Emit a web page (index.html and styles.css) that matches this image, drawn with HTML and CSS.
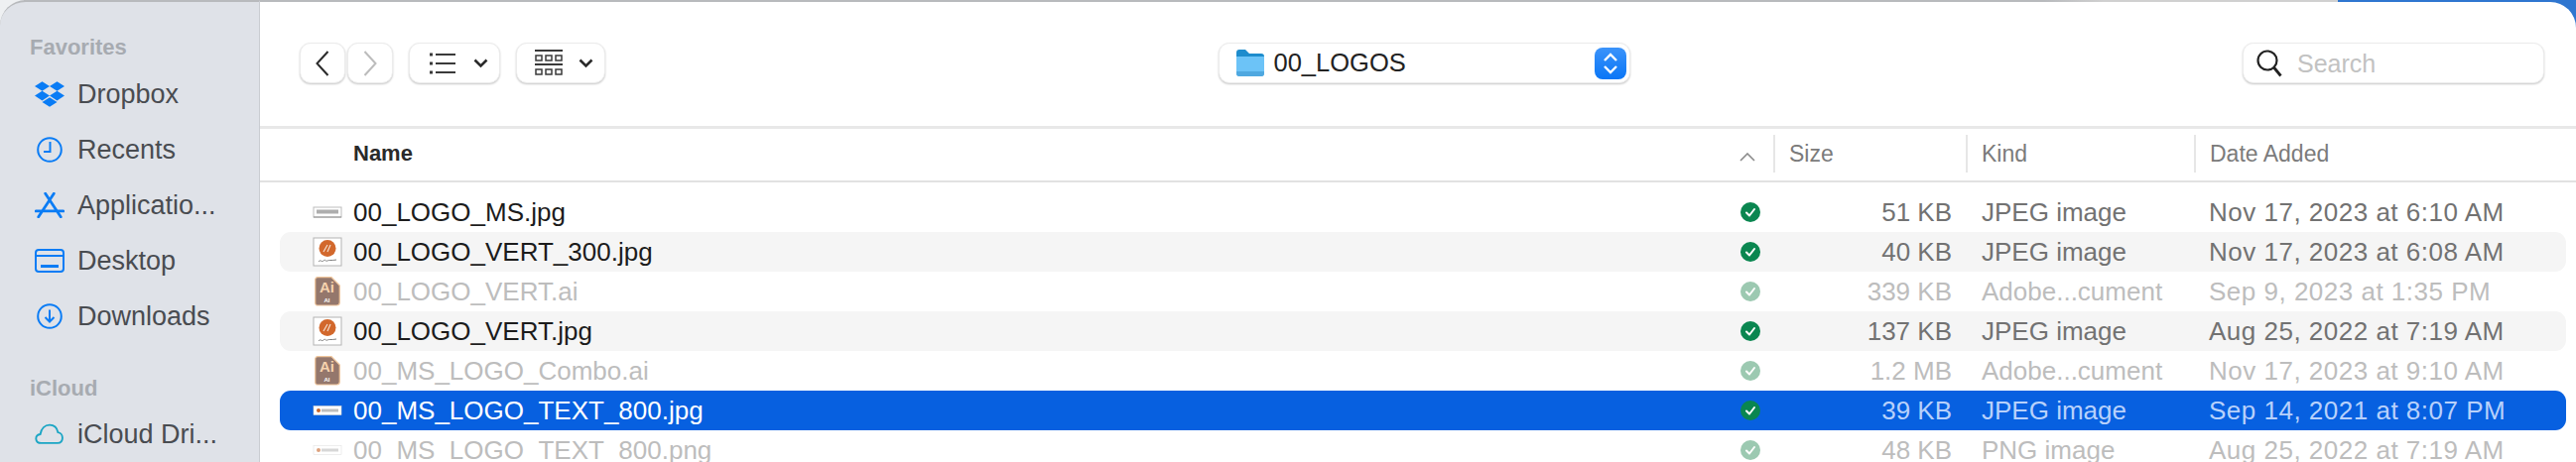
FILE: index.html
```html
<!DOCTYPE html>
<html lang="en">
<head>
  <meta charset="UTF-8" />
  <title>00_LOGOS</title>
  <link rel="stylesheet" href="styles.css">
</head>
<body>

  <svg class="defs" width="0" height="0">
    <symbol id="check" viewBox="0 0 20 20">
      <circle cx="10" cy="10" r="10" fill="currentColor"/>
      <path d="M6 10.500l3 3 5-6.500" fill="none" stroke="#fff" stroke-width="2" stroke-linecap="round" stroke-linejoin="round"/>
    </symbol>
    <symbol id="thumb-wide" viewBox="0 0 30 12">
      <rect x="1" y="1" width="28" height="10" fill="#fff" stroke="#bdbdbd"/>
      <rect x="4" y="3.500" width="22" height="4" fill="#aeaeae"/>
      <path d="M1 11h28" stroke="#8f8f8f" stroke-width="1.200"/>
    </symbol>
    <symbol id="thumb-text" viewBox="0 0 30 12">
      <rect x="1" y="1.500" width="28" height="9" fill="#fff" stroke="#d0d0d0" stroke-width=".6"/>
      <circle cx="6" cy="6" r="2" fill="#c8652a"/>
      <rect x="9" y="4.500" width="17" height="3" fill="#bdbdbd"/>
    </symbol>
    <symbol id="thumb-square" viewBox="0 0 30 30">
      <rect x="1" y="1" width="28" height="28" fill="#fff" stroke="#b4b4b4"/>
      <circle cx="15" cy="11.500" r="8.500" fill="#d2682c"/>
      <path d="M11 15l4-7M15 15l3-7" stroke="#f3dccb" stroke-width="1.200"/>
      <path d="M6 25c2-3 3 1 5-1s2 1 4 0 3 0 9-1" fill="none" stroke="#7e7e7e" stroke-width="1"/>
    </symbol>
  </svg>

  <div class="window">
    <nav class="sidebar">
      <div class="side-head first">Favorites</div>
      <div class="side-item">
        <svg class="side-icon" viewBox="0 0 28 24" fill="#0a7cf5"><path d="M7 0l7 4.500L7 9 0 4.500zM21 0l7 4.500L21 9l-7-4.500zM7 9l7 4.500L7 18l-7-4.500zM21 9l7 4.500-7 4.500-7-4.500zM7 19.500l7-4.500 7 4.500-7 4.500z"/></svg>
        Dropbox
      </div>
      <div class="side-item">
        <svg class="side-icon" viewBox="0 0 28 26" fill="none" stroke="#0a7cf5" stroke-width="2"><circle cx="14" cy="13" r="11.800"/><path d="M14.500 5v10H8"/></svg>
        Recents
      </div>
      <div class="side-item">
        <svg class="side-icon" viewBox="0 0 28 24" fill="none" stroke="#0a7cf5" stroke-width="2.600" stroke-linecap="round"><path d="M10 1l14.500 22M18 1L3.500 23M1 17.500h26"/></svg>
        Applicatio...
      </div>
      <div class="side-item">
        <svg class="side-icon" viewBox="0 0 30 24" fill="none" stroke="#0a7cf5" stroke-width="2"><rect x="1" y="1" width="28" height="22" rx="3"/><path d="M1 7h28"/><path d="M6 17.500h18" stroke-width="3"/></svg>
        Desktop
      </div>
      <div class="side-item">
        <svg class="side-icon" viewBox="0 0 28 26" fill="none" stroke="#0a7cf5" stroke-width="2"><circle cx="14" cy="13" r="11.800"/><path d="M14 6.500v12M9.500 14l4.500 4.500 4.500-4.500"/></svg>
        Downloads
      </div>
      <div class="side-head">iCloud</div>
      <div class="side-item">
        <svg class="side-icon" viewBox="0 0 32 22" fill="none" stroke="#1aa5c4" stroke-width="2"><path d="M7 20.500c-7 0-7.500-8.500-1-9.500C7 5 11 1 16 1s8 3 9 8c6 .5 7 11.500-.5 11.500z"/></svg>
        iCloud Dri...
      </div>
    </nav>

    <main class="content">
      <div class="toolbar">
        <div class="tool-group">
          <div class="nav-btns">
            <button class="btn nav-btn"><svg width="14" height="26" viewBox="0 0 14 26" fill="none" stroke="#2b2b2b" stroke-width="2"><path d="M12.500 1L1.500 13l11 12"/></svg></button>
            <button class="btn nav-btn"><svg width="14" height="26" viewBox="0 0 14 26" fill="none" stroke="#bcbcbc" stroke-width="2"><path d="M1.500 1l11 12-11 12"/></svg></button>
          </div>
          <button class="btn view-btn list-btn">
            <svg width="26" height="24" viewBox="0 0 26 24" fill="none" stroke="#3a3a3a" stroke-width="2"><path d="M6 3h20M6 12h20M6 21h20"/><path d="M0 3h3M0 12h3M0 21h3" stroke-width="3"/></svg>
            <svg width="15" height="10" viewBox="0 0 15 10" fill="none" stroke="#2b2b2b" stroke-width="2.600"><path d="M1.500 1.500l6 6 6-6"/></svg>
          </button>
          <button class="btn view-btn grid-btn">
            <svg width="28" height="28" viewBox="0 0 28 28" fill="none" stroke="#3a3a3a" stroke-width="1.500"><path d="M0 1h28M0 15h28" stroke-width="2"/><rect x="1" y="6" width="6" height="5"/><rect x="11" y="6" width="6" height="5"/><rect x="21" y="6" width="6" height="5"/><rect x="1" y="20" width="6" height="5"/><rect x="11" y="20" width="6" height="5"/><rect x="21" y="20" width="6" height="5"/></svg>
            <svg width="15" height="10" viewBox="0 0 15 10" fill="none" stroke="#2b2b2b" stroke-width="2.600"><path d="M1.500 1.500l6 6 6-6"/></svg>
          </button>
        </div>

        <div class="btn path-box">
          <svg width="28" height="27" viewBox="0 0 28 27"><path d="M0 3a3 3 0 0 1 3-3h6l4 4h12a3 3 0 0 1 3 3v4H0z" fill="#1d8ccd"/><path d="M0 7h28v17a3 3 0 0 1-3 3H3a3 3 0 0 1-3-3z" fill="#6cc3f7"/><path d="M0 22h28v2a3 3 0 0 1-3 3H3a3 3 0 0 1-3-3z" fill="#4fa8e0"/></svg>
          <span class="path-name">00_LOGOS</span>
          <span class="stepper">
            <svg width="16" height="24" viewBox="0 0 16 24" fill="none" stroke="#fff" stroke-width="2.400"><path d="M2 9l6-6 6 6M2 15l6 6 6-6"/></svg>
          </span>
        </div>

        <div class="btn search-box">
          <svg width="26" height="28" viewBox="0 0 26 28" fill="none" stroke="#222" stroke-width="2.200"><circle cx="11" cy="11" r="9.500"/><path d="M17.500 18l7 8.500" stroke-width="2.800"/></svg>
          <span>Search</span>
        </div>
      </div>

      <div class="list-head">
        <div class="col-name">Name</div>
        <div class="col-sort"><svg width="16" height="9" viewBox="0 0 16 9" fill="none" stroke="#8a8a8a" stroke-width="1.600"><path d="M1 8l7-7 7 7"/></svg></div>
        <div class="col-title">Size</div>
        <div class="col-title">Kind</div>
        <div class="col-title">Date Added</div>
      </div>

      <div class="rows">
        <div class="row">
          <svg class="thumb"><use href="#thumb-wide"/></svg>
          <div class="name">00_LOGO_MS.jpg</div>
          <svg class="check"><use href="#check"/></svg>
          <div class="size">51 KB</div><div class="kind">JPEG image</div><div class="date">Nov 17, 2023 at 6:10 AM</div>
        </div>
        <div class="row alt">
          <svg class="thumb"><use href="#thumb-square"/></svg>
          <div class="name">00_LOGO_VERT_300.jpg</div>
          <svg class="check"><use href="#check"/></svg>
          <div class="size">40 KB</div><div class="kind">JPEG image</div><div class="date">Nov 17, 2023 at 6:08 AM</div>
        </div>
        <div class="row dim">
          <svg class="thumb" viewBox="-2 0 30 30"><path d="M3 .7h14l8.300 8.300v17a3 3 0 0 1-3 3H3a2.300 2.300 0 0 1-2.300-2.300V3A2.300 2.300 0 0 1 3 .7z" class="ai-page"/><text x="12.500" y="16" text-anchor="middle" class="ai-big">Ai</text><text x="12.500" y="26" text-anchor="middle" class="ai-small">AI</text></svg>
          <div class="name">00_LOGO_VERT.ai</div>
          <svg class="check"><use href="#check"/></svg>
          <div class="size">339 KB</div><div class="kind">Adobe...cument</div><div class="date">Sep 9, 2023 at 1:35 PM</div>
        </div>
        <div class="row alt">
          <svg class="thumb"><use href="#thumb-square"/></svg>
          <div class="name">00_LOGO_VERT.jpg</div>
          <svg class="check"><use href="#check"/></svg>
          <div class="size">137 KB</div><div class="kind">JPEG image</div><div class="date">Aug 25, 2022 at 7:19 AM</div>
        </div>
        <div class="row dim">
          <svg class="thumb" viewBox="-2 0 30 30"><path d="M3 .7h14l8.300 8.300v17a3 3 0 0 1-3 3H3a2.300 2.300 0 0 1-2.300-2.300V3A2.300 2.300 0 0 1 3 .7z" class="ai-page"/><text x="12.500" y="16" text-anchor="middle" class="ai-big">Ai</text><text x="12.500" y="26" text-anchor="middle" class="ai-small">AI</text></svg>
          <div class="name">00_MS_LOGO_Combo.ai</div>
          <svg class="check"><use href="#check"/></svg>
          <div class="size">1.2 MB</div><div class="kind">Adobe...cument</div><div class="date">Nov 17, 2023 at 9:10 AM</div>
        </div>
        <div class="row selected">
          <svg class="thumb"><use href="#thumb-text"/></svg>
          <div class="name">00_MS_LOGO_TEXT_800.jpg</div>
          <svg class="check"><use href="#check"/></svg>
          <div class="size">39 KB</div><div class="kind">JPEG image</div><div class="date">Sep 14, 2021 at 8:07 PM</div>
        </div>
        <div class="row dim">
          <svg class="thumb faded"><use href="#thumb-text"/></svg>
          <div class="name">00_MS_LOGO_TEXT_800.png</div>
          <svg class="check"><use href="#check"/></svg>
          <div class="size">48 KB</div><div class="kind">PNG image</div><div class="date">Aug 25, 2022 at 7:19 AM</div>
        </div>
      </div>
    </main>
  </div>

</body>
</html>
```

FILE: styles.css
```css
html, body {
  height: 100%;
}
body {
  margin: 0;
  overflow: hidden;
  font-family: 'Liberation Sans', Arial, sans-serif;
  background: linear-gradient(to right, #eef0f2 0 24px, #b8babd 24px 2060px, #d0d0d0 2120px 2356px, #2f76d0 2356px);
}
.defs {
  position: absolute;
}
.ai-page {
  fill: #94776c;
  stroke: #f0c69c;
  stroke-width: 1.2;
}
.ai-big {
  font: bold 15px 'Liberation Sans', sans-serif;
  fill: #f7d3ae;
}
.ai-small {
  font: bold 6px 'Liberation Sans', sans-serif;
  fill: #fff;
}
.window {
  display: flex;
  height: 466px;
}

/* sidebar */
.sidebar {
  box-sizing: border-box;
  width: 262px;
  flex: none;
  background-color: #dfe2e8;
  border-top: 2px solid #b8babd;
  border-right: 1px solid #c9ccd2;
  border-top-left-radius: 26px;
}
.side-head {
  height: 24px;
  line-height: 24px;
  margin: 33px 0 6px 30px;
  font-size: 22px;
  font-weight: bold;
  color: #a7abb1;
}
.side-head.first {
  margin: 34px 0 7px 30px;
}
.side-item {
  display: flex;
  align-items: center;
  height: 56px;
  font-size: 27px;
  color: #494c51;
}
.side-icon {
  width: 30px;
  height: 26px;
  margin: 0 13px 0 35px;
  flex: none;
}

/* main area */
.content {
  flex: 1;
  min-width: 0;
  margin-top: 2px;
  background-color: #fff;
  border-top-right-radius: 26px;
  overflow: hidden;
}
.toolbar {
  box-sizing: border-box;
  height: 125px;
  padding: 41px 32px 0 40px;
  display: flex;
  justify-content: space-between;
  align-items: flex-start;
}
.tool-group {
  display: flex;
  gap: 16px;
}
.nav-btns {
  display: flex;
  gap: 2px;
}
.btn {
  box-sizing: border-box;
  height: 41px;
  padding: 0;
  border: 1px solid #ececec;
  border-radius: 11px;
  background: #fff;
  box-shadow: 0 1px 2px rgba(0, 0, 0, 0.22);
}
.nav-btn {
  width: 46px;
  display: flex;
  align-items: center;
  justify-content: center;
}
.view-btn {
  display: flex;
  align-items: center;
}
.list-btn {
  width: 92px;
  gap: 18px;
  padding-left: 20px;
}
.grid-btn {
  width: 90px;
  gap: 16px;
  padding-left: 18px;
}
.path-box {
  width: 415px;
  display: flex;
  align-items: center;
  padding-left: 17px;
  padding-right: 3px;
}
.path-name {
  flex: 1;
  margin-left: 10px;
  font-size: 25.5px;
  color: #222;
}
.stepper {
  width: 32px;
  height: 32px;
  border-radius: 8px;
  background: linear-gradient(#3b93fa, #0a76f6);
  display: flex;
  align-items: center;
  justify-content: center;
}
.search-box {
  width: 304px;
  display: flex;
  align-items: center;
  padding-left: 13px;
  gap: 15px;
  font-size: 25px;
  color: #c2c2c2;
}
.search-box span {
  padding-top: 2px;
}

/* column header */
.list-head {
  box-sizing: border-box;
  height: 57px;
  border-top: 3px solid #e8e8e8;
  border-bottom: 2px solid #e2e2e2;
  padding: 0 0 2px 94px;
  display: grid;
  grid-template-columns: 1397px 34px 194px 230px 1fr;
  align-items: center;
  font-size: 23px;
  color: #7b7b7b;
}
.col-name {
  font-size: 22px;
  font-weight: bold;
  color: #2a2a2a;
}
.col-title {
  height: 38px;
  line-height: 38px;
  padding-left: 14px;
  border-left: 2px solid #e6e6e6;
}

/* file rows */
.rows {
  padding: 10px 10px 0 20px;
}
.row {
  height: 40px;
  display: grid;
  grid-template-columns: 74px 1398px 20px 193px 259px 1fr;
  align-items: center;
  font-size: 26px;
  border-radius: 11px;
  color: #727272;
}
.thumb {
  width: 30px;
  height: 30px;
  margin-left: 33px;
}
.name {
  color: #1c1c1c;
}
.check {
  width: 20px;
  height: 20px;
  color: #0a8650;
}
.size {
  text-align: right;
}
.kind {
  padding-left: 30px;
}
.date {
  letter-spacing: 0.5px;
}
.row.alt {
  background-color: #f5f5f5;
}
.row.dim {
  color: #bdbdbd;
}
.row.dim .name {
  color: #bdbdbd;
}
.row.dim .check {
  color: #9cc9b1;
}
.row.selected {
  background-color: #0760e0;
  color: #b8d1fb;
}
.row.selected .name {
  color: #fff;
}
.faded {
  opacity: 0.6;
}
```
